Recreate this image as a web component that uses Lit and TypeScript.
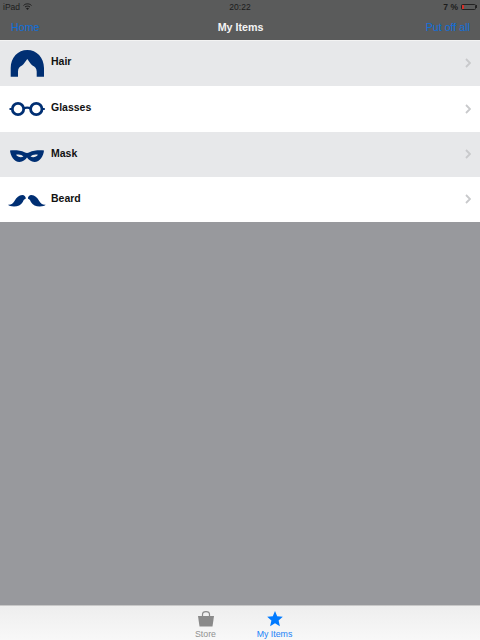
import { LitElement, html, css, svg } from "lit";
import { customElement } from "lit/decorators.js";

const icons = [
  svg`<path fill="#002f73" d="M2.700 28.700V20C2.700 9.500 10 2 19.300 2S36 9.500 36 20V28.700H28.700V23.500C28.700 20.500 27 18.500 24.500 17.500C22.500 16 21 13 19.300 11C17.500 13 16 16 14 17.500C11.500 18.500 10 20.500 10 23.500V28.700Z"/>`,
  svg`<g fill="none" stroke="#002f73"><circle cx="10" cy="15" r="5.700" stroke-width="2.800"/><circle cx="28.300" cy="15" r="5.700" stroke-width="2.800"/><path stroke-width="2.200" d="M15.500 14.500Q19.100 12.800 22.800 14.500M4.500 15H1.500M33.800 15H36.800"/></g>`,
  svg`<path fill="#002f73" fill-rule="evenodd" d="M2 10.500C7 10 13 10.500 16.500 12.300C18 13.100 20 13.100 21.500 12.300C25 10.500 31 10 36 10.500C35.500 16 32 22 26.500 22C23 22 20.800 19.800 19 17.500C17.200 19.800 15 22 11.500 22C6 22 2.500 16 2 10.500ZM8 14.800C9.500 17 13 18 15.500 16.500C14 14.800 11 14 8 14.800ZM22.500 16.500C25 18 28.500 17 30 14.800C27 14 24 14.800 22.500 16.500Z"/>`,
  svg`<path fill="#002f73" d="M0 19.800C3.500 20 5 18.500 6.500 16C8.500 12.500 11 10 14.200 10C16.500 10 18 11.800 17.700 13.800C16.200 14 15.500 15.500 14.800 17C13 20.200 9.800 21.500 6 21.500C3 21.500 1 21 0 19.800ZM37.700 19.800C34.200 20 32.700 18.500 31.200 16C29.200 12.500 26.700 10 23.500 10C21.200 10 19.700 11.800 20 13.800C21.500 14 22.200 15.500 22.900 17C24.700 20.200 27.900 21.500 31.700 21.500C34.700 21.500 36.700 21 37.700 19.800Z"/>`,
];

@customElement("app-root")
export class AppRoot extends LitElement {
  static styles = css`
    :host {
      display: flex;
      flex-direction: column;
      height: 640px;
      width: 480px;
      background: #98999d;
      font-family: "Liberation Sans", Arial, sans-serif;
      overflow: hidden;
    }
    .top {
      height: 40px;
      flex: none;
      background: #5a5b5b;
      display: flex;
      flex-direction: column;
    }
    .status {
      height: 13px;
      padding: 0 3px 0 3px;
      display: grid;
      grid-template-columns: 1fr auto 1fr;
      align-items: center;
      font-size: 8.500px;
      color: #1c1c1c;
    }
    .status .l, .status .r {
      display: flex;
      align-items: center;
      gap: 3px;
    }
    .status .r { justify-content: flex-end; font-weight: 700; }
    .batt {
      width: 15px;
      height: 6px;
      border: 1px solid #222;
      border-radius: 1.500px;
      display: block;
      background: linear-gradient(to right, #d8302a 2px, transparent 2px);
      box-sizing: border-box;
      position: relative;
      margin-right: 1px;
    }
    .batt::after {
      content: "";
      position: absolute;
      left: 14px;
      top: 0.500px;
      width: 1px;
      height: 3px;
      background: #222;
    }
    .nav {
      flex: 1;
      display: grid;
      grid-template-columns: 1fr auto 1fr;
      align-items: center;
      padding: 0 10px 0 11px;
      font-size: 10.700px;
      color: #0f6fdc;
    }
    .nav .title { color: #f4f4f4; font-weight: 700; }
    .nav .right { text-align: right; }
    .list { flex: none; }
    .row {
      height: 46px;
      display: flex;
      align-items: center;
      background: #fff;
      box-sizing: border-box;
    }
    .row:nth-child(n + 3) { height: 45px; }
    .row:first-child { box-shadow: inset 0 1px 0 #f3f3f3; }
    .row.alt { background: #e7e8ea; }
    .row svg.ic { width: 38px; height: 30px; margin-left: 8px; flex: none; }
    .row .name {
      margin-left: 5px;
      flex: 1;
      font-size: 10.500px;
      font-weight: 700;
      color: #111;
      margin-top: -4px;
    }
    .row svg.ch { width: 6px; height: 10px; margin-right: 9px; margin-top: -1px; }
    .fill { flex: 1; }
    .tabs {
      height: 35px;
      flex: none;
      background: linear-gradient(#eeeeee, #f8f8f8);
      border-top: 1px solid #c8c8c8;
      box-sizing: border-box;
      display: flex;
      justify-content: center;
      gap: 30px;
    }
    .tab {
      width: 39px;
      display: flex;
      flex-direction: column;
      align-items: center;
      font-size: 8.800px;
      color: #909090;
      padding-top: 5px;
      white-space: nowrap;
    }
    .tab.on { color: #1a82f7; }
    .tab svg { width: 18px; height: 17px; margin-bottom: 1px; flex: none; }
  `;

  render() {
    const names = ["Hair", "Glasses", "Mask", "Beard"];
    return html`
      <div class="top">
        <div class="status">
          <div class="l">iPad
            <svg width="9" height="7" viewBox="0 0 9 7"><g fill="none" stroke="#1c1c1c" stroke-width="1"><path d="M.5 2.500C2.700 .3 6.300 .3 8.500 2.500"/><path d="M2 4C3.400 2.800 5.600 2.800 7 4"/></g><path fill="#1c1c1c" d="M4.500 7L3 5.200C3.800 4.500 5.200 4.500 6 5.200Z"/></svg>
          </div>
          <div>20:22</div>
          <div class="r">7 %<span class="batt"></span></div>
        </div>
        <div class="nav">
          <div>Home</div>
          <div class="title">My Items</div>
          <div class="right">Put off all</div>
        </div>
      </div>
      <div class="list">
        ${names.map(
          (n, i) => html`<div class="row ${i % 2 === 0 ? "alt" : ""}">
            <svg class="ic" viewBox="0 0 38 30">${icons[i]}</svg>
            <div class="name">${n}</div>
            <svg class="ch" viewBox="0 0 6 10"><path d="M1 1L5 5L1 9" fill="none" stroke="#c8c9cb" stroke-width="1.800"/></svg>
          </div>`
        )}
      </div>
      <div class="fill"></div>
      <div class="tabs">
        <div class="tab">
          <svg viewBox="0 0 18 17"><path fill="#8a8a8a" d="M1 5H17L15.500 15.500H2.500Z"/><path fill="none" stroke="#8a8a8a" stroke-width="1.200" d="M5.500 7V3.500C5.500 -.3 12.500 -.3 12.500 3.500V7"/></svg>
          Store
        </div>
        <div class="tab on">
          <svg viewBox="0 0 18 17"><path fill="#007aff" d="M9 0L11.200 5.300L16.800 5.800L12.600 9.600L13.900 15.200L9 12.200L4.100 15.200L5.400 9.600L1.200 5.800L6.800 5.300Z"/></svg>
          My Items
        </div>
      </div>
    `;
  }
}
